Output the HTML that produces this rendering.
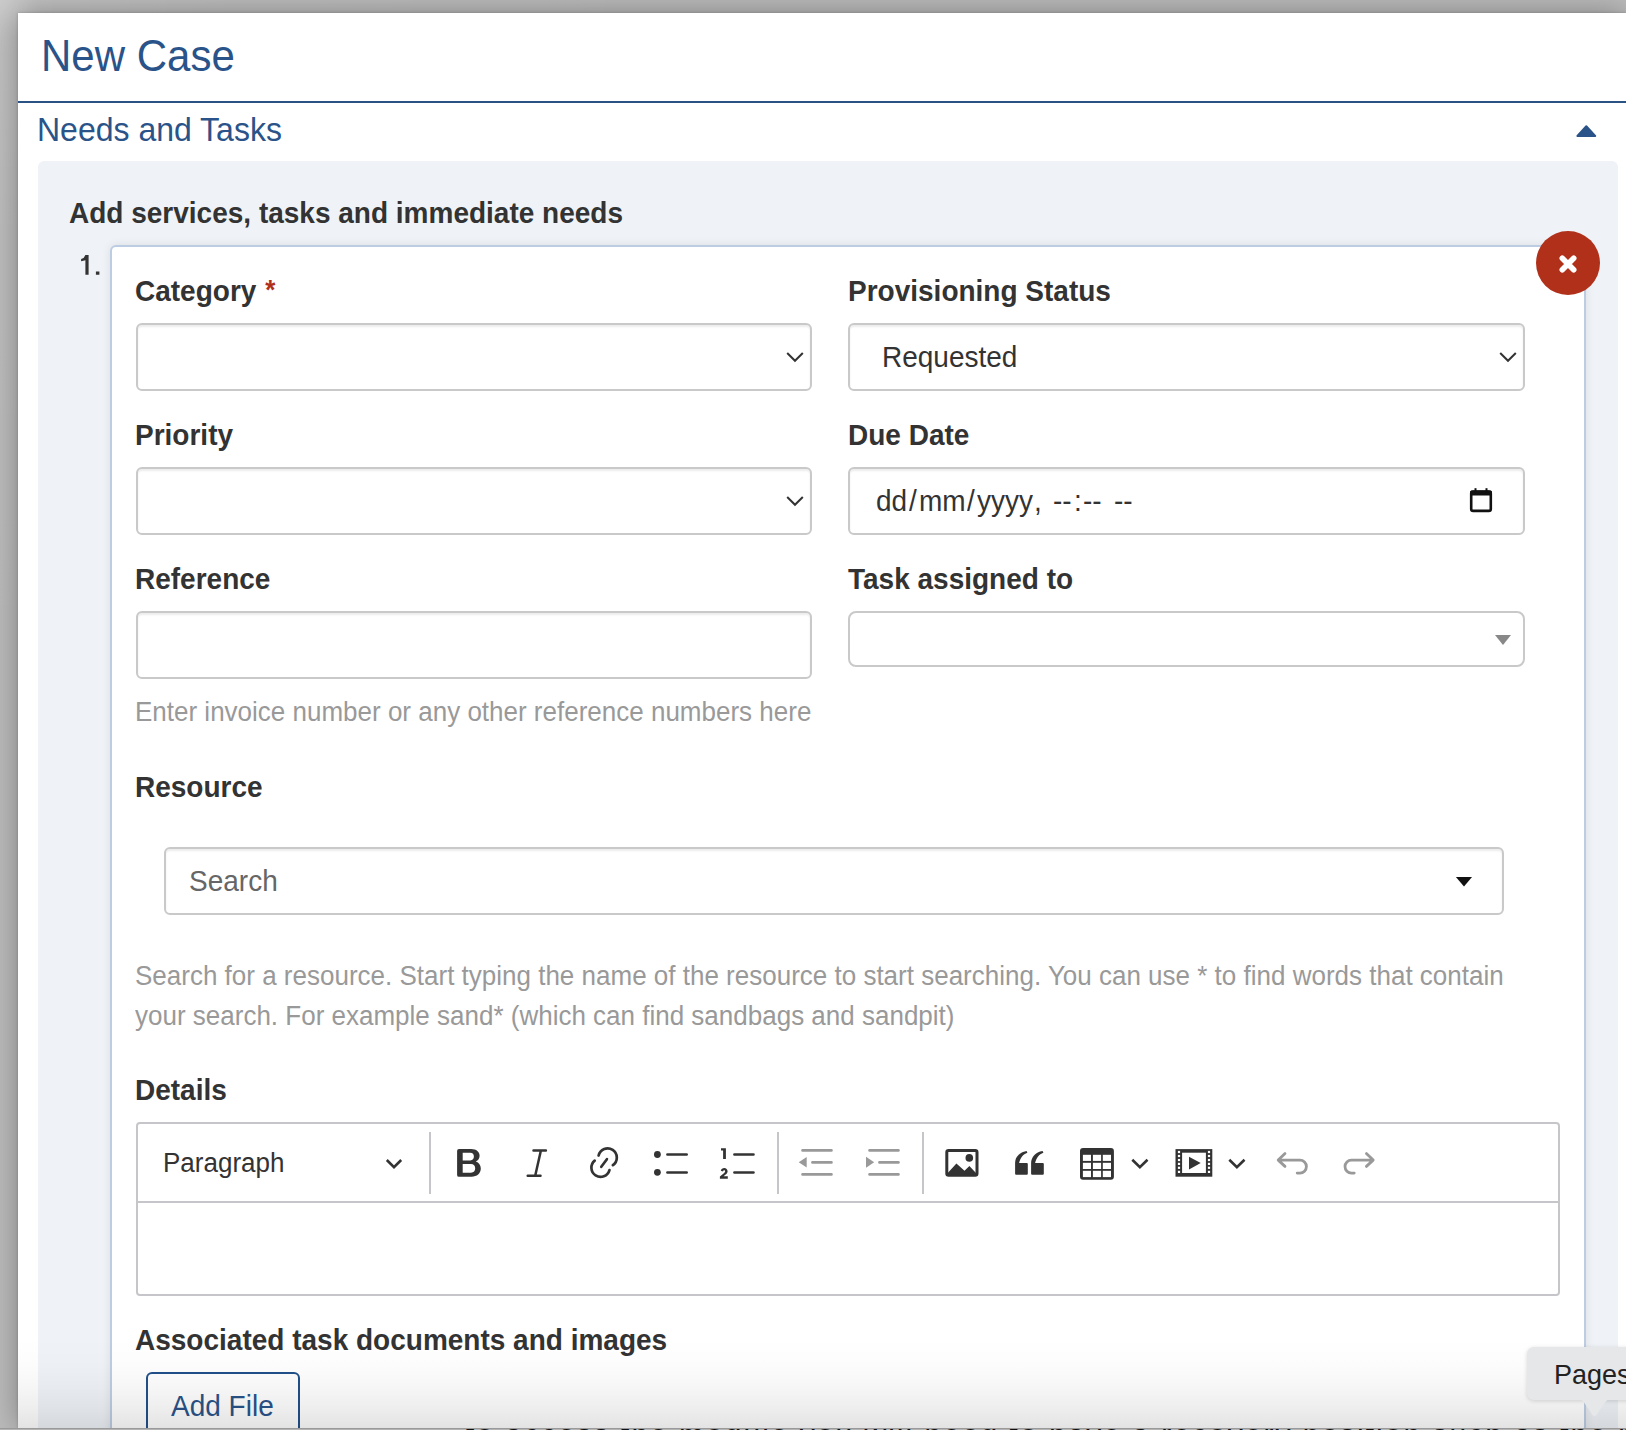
<!DOCTYPE html>
<html><head><meta charset="utf-8">
<style>
*{box-sizing:border-box;margin:0;padding:0}
html,body{width:1626px;height:1430px;overflow:hidden;font-family:"Liberation Sans",sans-serif;color:#333}
body{position:relative;background:#bcbcbc}
.a{position:absolute}
.t{position:absolute;white-space:nowrap;line-height:1;transform:scaleY(1.05);transform-origin:0 0.83em}
#bgtop{left:0;top:0;width:1626px;height:13px;background:linear-gradient(#a9a9a9,#9c9c9c 11px,#929292 12px,#929292)}
#bgleft{left:0;top:13px;width:18px;height:1417px;background:linear-gradient(90deg,#b2b2b2,#9c9c9c 16px,#929292 17px,#929292)}
#corner{left:0;top:0;width:1626px;height:1430px;background:radial-gradient(circle at 0 0,rgba(255,255,255,.24),rgba(255,255,255,.1) 40px,rgba(255,255,255,.04) 200px,rgba(255,255,255,0) 700px)}
#modal{left:18px;top:13px;width:1608px;height:1415px;background:#fff;box-shadow:0 0 30px rgba(0,0,0,.33),0 0 3px rgba(0,0,0,.2)}
.blue{color:#2a5389}
.lbl{font-weight:bold;font-size:28px;color:#333}
.help{font-size:26px;color:#999}
.fc{position:absolute;border:2px solid #c9c9c9;border-radius:6px;background:#fff;box-shadow:inset 0 2px 2px rgba(0,0,0,.075)}
#panel{left:38px;top:161px;width:1580px;height:1300px;background:#eff3f8;border-radius:6px}
#card{left:110px;top:245px;width:1476px;height:1300px;background:#fff;border:2px solid #bccde3;border-radius:6px;box-shadow:0 0 10px rgba(0,0,0,.09)}
#close{left:1536px;top:231px;width:64px;height:64px;border-radius:50%;background:#b0301a}
#editor{left:136px;top:1122px;width:1424px;height:174px;border:2px solid #c6c6ca;border-radius:4px;background:#fff}
#tbline{left:136px;top:1201px;width:1424px;height:2px;background:#c6c6ca}
.sep{position:absolute;top:1132px;width:2px;height:62px;background:#c6c6ca}
#addfile{left:146px;top:1372px;width:154px;height:80px;border:2px solid #21508a;border-radius:6px;background:#fff}
#fade{left:18px;top:1338px;width:1608px;height:90px;background:linear-gradient(rgba(0,0,0,0),rgba(0,0,0,.012) 30%,rgba(0,0,0,.035) 55%,rgba(0,0,0,.07) 80%,rgba(0,0,0,.11))}
#strip{left:0;top:1428px;width:1626px;height:2px;background:linear-gradient(#999 50%,#b4b4b4 50%);overflow:hidden}
#tip{left:1527px;top:1347px;width:140px;height:53px;background:#e6e7e8;border-radius:7px;box-shadow:0 1px 4px rgba(0,0,0,.15)}
.dt{font-size:28px;color:#333}
</style></head><body>
<div class="a" id="corner"></div>
<div class="a" id="modal"></div>

<div class="t blue" style="left:41px;top:36px;font-size:42px">New Case</div>
<div class="a" style="left:18px;top:101px;width:1608px;height:2px;background:#2b5285"></div>
<div class="t blue" style="left:37px;top:114px;font-size:32px">Needs and Tasks</div>
<svg class="a" style="left:1574px;top:122px" width="26" height="18" viewBox="0 0 26 18"><path d="M12.3 4.3 L3.4 13.9 L21.2 13.9 Z" fill="#2a5389" stroke="#2a5389" stroke-width="2" stroke-linejoin="round"/></svg>

<div class="a" id="panel"></div>
<div class="t lbl" style="left:69px;top:200px">Add services, tasks and immediate needs</div>
<svg class="a" style="left:78px;top:252px" width="26" height="26" viewBox="0 0 26 26"><path fill="#333" d="M7.4 2.9 H10.6 V22.7 H7.4 V8.3 L3.1 9.3 V6.9 Q6.6 5.9 7.4 2.9 Z M17.9 19.6 H21.4 V22.7 H17.9 Z"/></svg>
<div class="a" id="card"></div>
<div class="a" id="close"></div>
<svg class="a" style="left:1556px;top:252px" width="24" height="24" viewBox="0 0 24 24"><path d="M6.3 6.3 L17.7 17.7 M17.7 6.3 L6.3 17.7" stroke="#fff" stroke-width="5.6" stroke-linecap="round"/></svg>

<!-- row 1 -->
<div class="t lbl" style="left:135px;top:278px">Category <span style="color:#b0301a;font-size:26px;position:relative;top:-2px;left:1px">*</span></div>
<div class="fc" style="left:136px;top:323px;width:676px;height:68px"></div>
<svg class="a" style="left:784px;top:350px" width="22" height="14" viewBox="0 0 22 14"><path d="M3.2 3 L11 10.8 L18.8 3" fill="none" stroke="#333" stroke-width="2"/></svg>

<div class="t lbl" style="left:848px;top:278px">Provisioning Status</div>
<div class="fc" style="left:848px;top:323px;width:677px;height:68px"></div>
<div class="t" style="left:882px;top:344px;font-size:28px;color:#333">Requested</div>
<svg class="a" style="left:1497px;top:350px" width="22" height="14" viewBox="0 0 22 14"><path d="M3.2 3 L11 10.8 L18.8 3" fill="none" stroke="#333" stroke-width="2"/></svg>

<!-- row 2 -->
<div class="t lbl" style="left:135px;top:422px">Priority</div>
<div class="fc" style="left:136px;top:467px;width:676px;height:68px"></div>
<svg class="a" style="left:784px;top:494px" width="22" height="14" viewBox="0 0 22 14"><path d="M3.2 3 L11 10.8 L18.8 3" fill="none" stroke="#333" stroke-width="2"/></svg>

<div class="t lbl" style="left:848px;top:422px">Due Date</div>
<div class="fc" style="left:848px;top:467px;width:677px;height:68px"></div>
<div class="t dt" style="left:876px;top:488px">dd</div>
<div class="t dt" style="left:909px;top:488px">/</div>
<div class="t dt" style="left:919px;top:488px">mm</div>
<div class="t dt" style="left:967px;top:488px">/</div>
<div class="t dt" style="left:977px;top:488px">yyyy</div>
<div class="t dt" style="left:1034px;top:488px">,</div>
<div class="t dt" style="left:1053px;top:488px">--</div>
<div class="t dt" style="left:1074px;top:488px">:</div>
<div class="t dt" style="left:1083px;top:488px">--</div>
<div class="t dt" style="left:1114px;top:488px">--</div>
<svg class="a" style="left:1468px;top:486px" width="26" height="28" viewBox="0 0 26 28"><rect x="3.2" y="5.5" width="19.6" height="19.4" rx="2" fill="none" stroke="#111" stroke-width="2.6"/><rect x="2" y="4.5" width="22" height="5" rx="1.5" fill="#111"/><rect x="6.5" y="2.2" width="2" height="4" fill="#111"/><rect x="17.5" y="2.2" width="2" height="4" fill="#111"/></svg>

<!-- row 3 -->
<div class="t lbl" style="left:135px;top:566px">Reference</div>
<div class="fc" style="left:136px;top:611px;width:676px;height:68px"></div>
<div class="t help" style="left:135px;top:699px">Enter invoice number or any other reference numbers here</div>

<div class="t lbl" style="left:848px;top:566px">Task assigned to</div>
<div class="fc" style="left:848px;top:611px;width:677px;height:56px;box-shadow:none;border-radius:8px"></div>
<svg class="a" style="left:1494px;top:634px" width="18" height="12" viewBox="0 0 18 12"><path d="M1 1 L17 1 L9 11 Z" fill="#888"/></svg>

<!-- resource -->
<div class="t lbl" style="left:135px;top:774px">Resource</div>
<div class="fc" style="left:164px;top:847px;width:1340px;height:68px"></div>
<div class="t" style="left:189px;top:868px;font-size:28px;color:#666">Search</div>
<svg class="a" style="left:1452px;top:873px" width="24" height="16" viewBox="0 0 24 16"><path d="M3.9 3.9 L20 3.9 L12 13.6 Z" fill="#111"/></svg>
<div class="t help" style="left:135px;top:963px">Search for a resource. Start typing the name of the resource to start searching. You can use * to find words that contain</div>
<div class="t help" style="left:135px;top:1003px">your search. For example sand* (which can find sandbags and sandpit)</div>

<!-- details -->
<div class="t lbl" style="left:135px;top:1077px">Details</div>
<div class="a" id="editor"></div>
<div class="a" id="tbline"></div>
<div class="t" style="left:163px;top:1150px;font-size:26px;color:#333">Paragraph</div>
<svg class="a" style="left:383px;top:1156px" width="22" height="16" viewBox="0 0 22 16"><path d="M3.8 4 L11 11.2 L18.2 4" fill="none" stroke="#333" stroke-width="2.6"/></svg>
<div class="sep" style="left:429px"></div>
<div class="sep" style="left:777px"></div>
<div class="sep" style="left:922px"></div>

<!-- bold -->
<svg class="a" style="left:454px;top:1146px" width="30" height="34" viewBox="0 0 30 34"><path fill="#333" fill-rule="evenodd" d="M5 3.1 H17 C22.5 3.1 25.6 6 25.6 9.8 C25.6 12.4 24.2 14.3 21.8 15.6 C25 16.6 26.8 19.3 26.8 22.6 C26.8 27.5 23 30.8 17.5 30.8 H5 Q3.1 30.8 3.1 28.9 V5 Q3.1 3.1 5 3.1 Z M8.7 6.7 V14.5 H16.3 C18.7 14.5 19.9 12.9 19.9 10.6 C19.9 8.3 18.7 6.7 16.3 6.7 Z M8.7 17.9 V26.7 H17 C19.7 26.7 21.2 24.8 21.2 22.3 C21.2 19.7 19.7 17.9 17 17.9 Z"/></svg>
<!-- italic -->
<svg class="a" style="left:524px;top:1146px" width="26" height="34" viewBox="0 0 26 34"><path d="M9.5 4.4 H21.9 M3.7 29.7 H16.5 M16.9 4.4 L11.2 29.7" fill="none" stroke="#333" stroke-width="2.5" stroke-linecap="round"/></svg>
<!-- link -->
<svg class="a" style="left:587px;top:1146px" width="34" height="36" viewBox="0 0 34 36"><g fill="none" stroke="#333" stroke-width="2.7" stroke-linecap="round"><path d="M11.63 9.55 A9.2 9.2 0 1 1 25.92 19.11"/><path d="M7.71 14.63 A9.2 9.2 0 1 0 22.47 24.14"/><path d="M14.3 20.8 L19.9 13.2"/></g></svg>
<!-- bullet list -->
<svg class="a" style="left:650px;top:1146px" width="42" height="34" viewBox="0 0 42 34"><circle cx="7.4" cy="8.5" r="3.4" fill="#333"/><circle cx="7.4" cy="26.3" r="3.4" fill="#333"/><path d="M17.45 8.5 H36.65 M17.45 26.5 H36.65" stroke="#333" stroke-width="2.7" stroke-linecap="round"/></svg>
<!-- numbered list -->
<svg class="a" style="left:716px;top:1146px" width="42" height="34" viewBox="0 0 42 34"><path d="M18.45 8.5 H37.45 M18.45 26.5 H37.45" stroke="#333" stroke-width="2.7" stroke-linecap="round"/><path d="M5 2.3 H9.9 V12.9 H7.1 V4.6 H5 Z" fill="#333"/><path d="M4.8 24.8 C5.2 22.8 6.6 22 8.2 22 C10.2 22 11.6 23.4 11.6 25.2 C11.6 26.6 10.8 27.6 9.6 28.6 L7.6 30.3 H11.8 V32.7 H3.9 V30.6 L8.2 26.9 C8.9 26.3 9.1 25.8 9.1 25.3 C9.1 24.7 8.7 24.3 8.1 24.3 C7.5 24.3 7.1 24.7 7 25.4 Z" fill="#333"/></svg>
<!-- outdent -->
<svg class="a" style="left:796px;top:1146px" width="40" height="34" viewBox="0 0 40 34"><path d="M6.55 4.45 H35.45 M16.45 16.4 H35.45 M6.55 28.4 H35.45" stroke="#999" stroke-width="2.7" stroke-linecap="round"/><path d="M2.7 16.3 L10.7 11 V21.4 Z" fill="#999"/></svg>
<!-- indent -->
<svg class="a" style="left:864px;top:1146px" width="40" height="34" viewBox="0 0 40 34"><path d="M5.55 4.45 H34.45 M15.45 16.4 H34.45 M5.55 28.4 H34.45" stroke="#999" stroke-width="2.7" stroke-linecap="round"/><path d="M10.2 16.3 L2 10.7 V21.7 Z" fill="#999"/></svg>
<!-- image -->
<svg class="a" style="left:943px;top:1146px" width="38" height="34" viewBox="0 0 38 34"><rect x="3.8" y="4.5" width="30.2" height="24.8" rx="1.8" fill="none" stroke="#333" stroke-width="3"/><circle cx="26.3" cy="11.9" r="3.8" fill="#333"/><path d="M4.5 27.2 L13.4 17.6 L21.5 24.7 L26.4 20.1 L33.2 27.2 V29 H4.5 Z" fill="#333"/></svg>
<!-- quote -->
<svg class="a" style="left:1012px;top:1146px" width="36" height="34" viewBox="0 0 36 34"><path fill="#333" d="M3.1 27.8 V17.2 C3.1 11 7.5 6 14.6 4.9 L15.4 6.8 C11 8.3 8.3 12 7.1 17.1 H14.8 Q15.8 17.1 15.8 18.1 V27.8 Q15.8 28.8 14.8 28.8 H4.1 Q3.1 28.8 3.1 27.8 Z M19.1 27.8 V17.2 C19.1 11 23.5 6 30.6 4.9 L31.4 6.8 C27 8.3 24.3 12 23.1 17.1 H30.8 Q31.8 17.1 31.8 18.1 V27.8 Q31.8 28.8 30.8 28.8 H20.1 Q19.1 28.8 19.1 27.8 Z"/></svg>
<!-- table -->
<svg class="a" style="left:1078px;top:1146px" width="38" height="36" viewBox="0 0 38 36"><rect x="2" y="2" width="33.9" height="31.8" rx="3" fill="#333"/><g fill="#fff"><rect x="4.9" y="8.8" width="8.1" height="6.1"/><rect x="14.9" y="8.8" width="8.2" height="6.1"/><rect x="24.8" y="8.8" width="8.2" height="6.1"/><rect x="4.9" y="16.8" width="8.1" height="6.2"/><rect x="14.9" y="16.8" width="8.2" height="6.2"/><rect x="24.8" y="16.8" width="8.2" height="6.2"/><rect x="4.9" y="24.8" width="8.1" height="6.3"/><rect x="14.9" y="24.8" width="8.2" height="6.3"/><rect x="24.8" y="24.8" width="8.2" height="6.3"/></g></svg>
<svg class="a" style="left:1128px;top:1156px" width="22" height="16" viewBox="0 0 22 16"><path d="M4.3 3.8 L11.9 11.2 L19.5 3.8" fill="none" stroke="#333" stroke-width="2.6"/></svg>
<!-- media -->
<svg class="a" style="left:1174px;top:1146px" width="40" height="34" viewBox="0 0 40 34"><rect x="1.5" y="3.1" width="36.8" height="27.6" fill="#333"/><rect x="8.1" y="6.7" width="23.8" height="20.3" fill="#fff"/><path d="M15 10.7 L26.7 17.1 L15 23.6 Z" fill="#333"/><g fill="#fff"><rect x="3.9" y="4.9" width="2.2" height="2.2"/><rect x="3.9" y="8.9" width="2.2" height="2.2"/><rect x="3.9" y="12.9" width="2.2" height="2.2"/><rect x="3.9" y="16.8" width="2.2" height="2.2"/><rect x="3.9" y="20.7" width="2.2" height="2.2"/><rect x="3.9" y="24.8" width="2.2" height="2.2"/><rect x="33.9" y="4.9" width="2.2" height="2.2"/><rect x="33.9" y="8.9" width="2.2" height="2.2"/><rect x="33.9" y="12.9" width="2.2" height="2.2"/><rect x="33.9" y="16.8" width="2.2" height="2.2"/><rect x="33.9" y="20.7" width="2.2" height="2.2"/><rect x="33.9" y="24.8" width="2.2" height="2.2"/></g></svg>
<svg class="a" style="left:1225px;top:1156px" width="22" height="16" viewBox="0 0 22 16"><path d="M4.3 3.8 L11.9 11.2 L19.5 3.8" fill="none" stroke="#333" stroke-width="2.6"/></svg>
<!-- undo -->
<svg class="a" style="left:1274px;top:1150px" width="36" height="28" viewBox="0 0 36 28"><path d="M11 3.6 L4.2 10.1 L11 16.4 M4.2 10.1 H25.9 A6.5 6.5 0 0 1 25.9 23.1 H23.2" fill="none" stroke="#999" stroke-width="2.8" stroke-linecap="round" stroke-linejoin="round"/></svg>
<!-- redo -->
<svg class="a" style="left:1341px;top:1150px" width="36" height="28" viewBox="0 0 36 28"><g transform="translate(36.4 0) scale(-1 1)"><path d="M11 3.6 L4.2 10.1 L11 16.4 M4.2 10.1 H25.9 A6.5 6.5 0 0 1 25.9 23.1 H23.2" fill="none" stroke="#999" stroke-width="2.8" stroke-linecap="round" stroke-linejoin="round"/></g></svg>

<!-- associated -->
<div class="t lbl" style="left:135px;top:1327px">Associated task documents and images</div>
<div class="a" id="addfile"></div>
<div class="t" style="left:171px;top:1393px;font-size:28px;color:#2a5389">Add File</div>

<div class="a" id="fade"></div>
<div class="a" id="tip"></div>
<svg class="a" style="left:1575px;top:1398px" width="40" height="22" viewBox="0 0 40 22"><path d="M2 1 C6 1 7 2 9 4.5 L17.5 17 C18.5 18.5 20.5 18.5 21.5 17 L30 4.5 C32 2 33 1 38 1 Z" fill="#e6e7e8"/></svg>
<div class="t" style="left:1554px;top:1362px;font-size:27px;color:#222">Pages</div>
<div class="a" id="strip"><div style="position:absolute;left:0;top:1px;width:1626px;height:1px;overflow:hidden"><div style="position:absolute;left:466px;top:-9px;font-size:30px;line-height:1;color:#111;white-space:nowrap;letter-spacing:2px">to access the module you will need to have a recovery position such as the built in recovery</div></div></div>
</body></html>
